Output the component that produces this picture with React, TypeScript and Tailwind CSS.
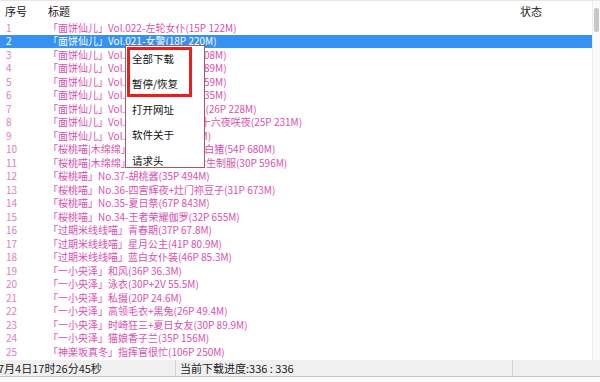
const rows: string[] = [
  '「面饼仙儿」Vol.022-左轮女仆(15P 122M)',
  '「面饼仙儿」Vol.021-女警(18P 220M)',
  '「面饼仙儿」Vol.020-白衬衫(16P 208M)',
  '「面饼仙儿」Vol.019-水手服(20P 189M)',
  '「面饼仙儿」Vol.018-兔女郎(17P 159M)',
  '「面饼仙儿」Vol.017-黑旗袍(21P 235M)',
  '「面饼仙儿」Vol.016-碧蓝航线公主(26P 228M)',
  '「面饼仙儿」Vol.015-东方Project 十六夜咲夜(25P 231M)',
  '「面饼仙儿」Vol.014-睡衣(18P 98M)',
  '「桜桃喵|木绵绵」双子-小黑猪与小白猪(54P 680M)',
  '「桜桃喵|木绵绵」双子-水手服JK学生制服(30P 596M)',
  '「桜桃喵」No.37-胡桃酱(35P 494M)',
  '「桜桃喵」No.36-四宫辉夜+灶门祢豆子(31P 673M)',
  '「桜桃喵」No.35-夏日祭(67P 843M)',
  '「桜桃喵」No.34-王者荣耀伽罗(32P 655M)',
  '「过期米线线喵」青春期(37P 67.8M)',
  '「过期米线线喵」星月公主(41P 80.9M)',
  '「过期米线线喵」蓝白女仆装(46P 85.3M)',
  '「一小央泽」和风(36P 36.3M)',
  '「一小央泽」泳衣(30P+2V 55.5M)',
  '「一小央泽」私摄(20P 24.6M)',
  '「一小央泽」高领毛衣+黑兔(26P 49.4M)',
  '「一小央泽」时崎狂三+夏日女友(30P 89.9M)',
  '「一小央泽」猫娘香子兰(35P 156M)',
  '「神楽坂真冬」指挥官很忙(106P 250M)',
];

const menuItems = ['全部下载', '暂停/恢复', '打开网址', '软件关于', '请求头'];

export default function App() {
  const selected = 2;

  return (
    <div className="relative w-[600px] h-[382px] overflow-hidden bg-white font-['Noto_Sans_CJK_SC',sans-serif] flex flex-col">
      {/* List + scrollbar */}
      <div className="h-[360px] flex border-t border-[#e6e6e6]">
        <div className="flex-1 flex flex-col overflow-hidden">
          {/* Header */}
          <div className="h-[20px] shrink-0 flex items-center text-[11px] text-[#222]">
            <span className="w-[48px] pl-[5px]">序号</span>
            <span className="flex-1">标题</span>
            <span className="w-[72px]">状态</span>
          </div>

          {rows.map((title, i) => {
            const n = i + 1;
            const isSel = n === selected;
            return (
              <div
                key={n}
                className={
                  isSel
                    ? 'h-[13.5px] shrink-0 flex items-center text-[10px] leading-none bg-[#3592f2] text-white'
                    : 'h-[13.5px] shrink-0 flex items-center text-[10px] leading-none'
                }
              >
                <span className={isSel ? 'w-[48px] pl-[6px]' : 'w-[48px] pl-[6px] text-[#e27cc4]'}>{n}</span>
                <span className={isSel ? 'whitespace-nowrap' : 'whitespace-nowrap text-[#d94fb0]'}>{title}</span>
              </div>
            );
          })}
        </div>

        {/* Scrollbar */}
        <div className="w-[8px] shrink-0 border-l border-[#ececec] bg-[#fafafa] pt-[7px] flex justify-center">
          <div className="w-[5px] h-[24px] rounded-[2px] bg-[#c8c8c8]" />
        </div>
      </div>

      {/* Status bar */}
      <div className="h-[17px] shrink-0 flex items-center bg-[#f0f0f0] border-b border-[#c4c4c4] text-[11px] text-[#222]">
        <div className="w-[176px] h-full flex items-center border-r border-[#d6d6d6] whitespace-nowrap">
          <span className="-ml-[2px]">7月4日17时26分45秒</span>
        </div>
        <div className="w-[337px] h-full flex items-center pl-[4px] border-r border-[#d6d6d6] whitespace-nowrap">
          当前下载进度:336 : 336
        </div>
        <div className="flex-1" />
      </div>
      <div className="flex-1 bg-[#fbfbfb]" />

      {/* Context menu */}
      <div className="absolute left-[125px] top-[45px] w-[80px] h-[123px] overflow-hidden bg-white border border-[#a85a5a] flex flex-col text-[10.5px] text-[#111]">
        {menuItems.map((item) => (
          <div key={item} className="h-[25.5px] shrink-0 flex items-center pl-[6px] whitespace-nowrap">
            {item}
          </div>
        ))}
      </div>

      {/* Red annotation box */}
      <div className="absolute left-[127px] top-[47px] w-[65px] h-[50px] border-[3px] border-[#ee1c1c]" />
    </div>
  );
}
